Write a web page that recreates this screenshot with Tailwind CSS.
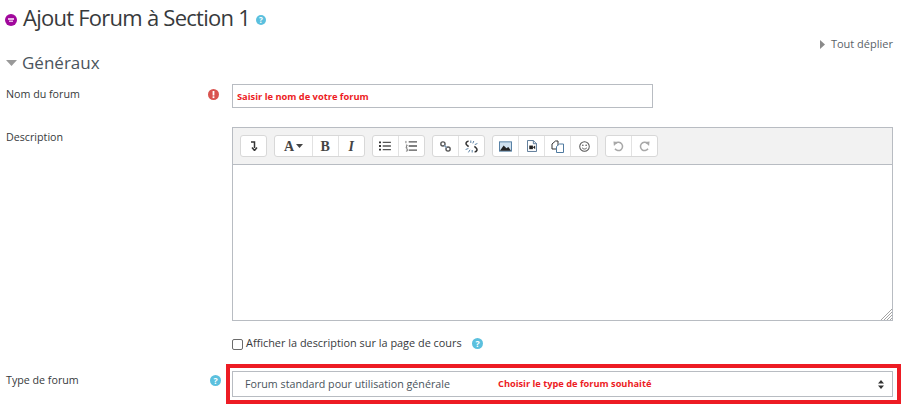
<!DOCTYPE html>
<html lang="fr">
<head>
    <meta charset="UTF-8">
    <title>Ajout Forum</title>
    <script src="https://cdn.jsdelivr.net/npm/@tailwindcss/browser@4"></script>
</head>
<body class="bg-white w-[912px] h-[410px] overflow-hidden font-['Open_Sans',sans-serif] text-[#373a3c]">
    <div class="pl-[6px] pr-[11px]">
        <!-- heading -->
        <div class="flex items-center h-[36px]">
            <svg class="w-[12px] h-[12px] mt-[3px] -ml-[1px]" viewBox="0 0 12 12"><circle cx="6" cy="6" r="6" fill="#a1089c"/><rect x="3" y="4" width="6" height="2" fill="#e8b8e6"/><rect x="4" y="6.5" width="4" height="1.5" fill="#e8b8e6"/></svg>
            <h2 class="ml-[6px] -mt-[2px] text-[22px] tracking-[-0.75px] leading-[36px] text-[#373a3c]">Ajout Forum à Section 1</h2>
            <svg class="ml-[6px] mt-[3px] w-[10px] h-[10px]" viewBox="0 0 10 10"><circle cx="5" cy="5" r="5" fill="#5bc0de"/><text x="5" y="8" text-anchor="middle" font-size="8" font-weight="700" fill="#fff" font-family="Open Sans">?</text></svg>
        </div>
        <div class="flex justify-end items-center h-[18px] mt-[-1px] mr-[8px] text-[11px] text-[#5a6268]">
            <svg class="w-[5px] h-[9px] mr-[6px]" viewBox="0 0 5 9"><path d="M0 0 L5 4.5 L0 9 Z" fill="#8a8a8a"/></svg>
            Tout déplier
        </div>
        <div class="flex items-center h-[24px] mt-[-2px]">
            <svg class="w-[11px] h-[6px]" viewBox="0 0 11 6"><path d="M0 0 H11 L5.5 6 Z" fill="#999"/></svg>
            <h3 class="ml-[5px] text-[17px] leading-[24px] text-[#4a545c]">Généraux</h3>
        </div>

        <!-- nom du forum -->
        <div class="flex mt-[9px] h-[24px]">
            <div class="w-[202px] text-[10.7px] leading-[20px]">Nom du forum</div>
            <div class="w-[24px] pt-[5px]">
                <svg class="w-[11px] h-[11px]" viewBox="0 0 11 11"><circle cx="5.5" cy="5.5" r="5.5" fill="#d9534f"/><rect x="4.6" y="2" width="1.8" height="4.5" fill="#fff"/><rect x="4.6" y="7.3" width="1.8" height="1.8" fill="#fff"/></svg>
            </div>
            <div class="w-[421px] h-[24px] border border-[#b8bcc2] pl-[4px] text-[9.3px] leading-[24px] font-bold text-[#ed1c24]">Saisir le nom de votre forum</div>
        </div>

        <!-- description -->
        <div class="flex mt-[19px]">
            <div class="w-[226px] text-[10.7px] leading-[20px]">Description</div>
            <div class="w-[661px] h-[194px] border border-[#b8bcc2] flex flex-col">
                <div class="h-[37px] bg-[#f2f2f2] border-b border-[#b8bcc2] flex gap-[7px] pl-[7px] pt-[7px] shrink-0">
                    <div class="flex h-[22px] bg-white border border-[#d8d8d8] rounded-[3px]">
                        <div class="w-[25px] flex items-center justify-center">
                            <svg class="w-[8px] h-[10px]" viewBox="0 0 8 10"><path d="M1 1H4.5V7M2 6.5L4.5 9.5L7 6.5" fill="none" stroke="#333" stroke-width="1.5"/></svg>
                        </div>
                    </div>
                    <div class="flex h-[22px] bg-white border border-[#d8d8d8] rounded-[3px] divide-x divide-[#e2e2e2]">
                        <div class="w-[38px] flex items-center justify-center gap-[2px] font-['Liberation_Serif',serif] font-bold text-[14px] text-[#444]">A<svg class="w-[7px] h-[4px]" viewBox="0 0 7 4"><path d="M0 0H7L3.5 4Z" fill="#444"/></svg></div>
                        <div class="w-[25.5px] flex items-center justify-center font-['Liberation_Serif',serif] font-bold text-[14px] text-[#444]">B</div>
                        <div class="w-[25.5px] flex items-center justify-center font-['Liberation_Serif',serif] font-bold italic text-[14px] text-[#444]">I</div>
                    </div>
                    <div class="flex h-[22px] bg-white border border-[#d8d8d8] rounded-[3px] divide-x divide-[#e2e2e2]">
                        <div class="w-[25.5px] flex items-center justify-center">
                            <svg class="w-[12px] h-[10px]" viewBox="0 0 13 11"><path d="M0 1.5H2M0 5.5H2M0 9.5H2" stroke="#222" stroke-width="2"/><path d="M4 1.5H13M4 5.5H13M4 9.5H13" stroke="#555" stroke-width="1.4"/></svg>
                        </div>
                        <div class="w-[25.5px] flex items-center justify-center">
                            <svg class="w-[12px] h-[12px]" viewBox="0 0 13 12"><path d="M1 0.5V3M1 5H2.5L1 7.5H2.5M1 9H2.5V11.5H1" fill="none" stroke="#555" stroke-width="0.8"/><path d="M4 1.5H13M4 6H13M4 10.5H13" stroke="#555" stroke-width="1.4"/></svg>
                        </div>
                    </div>
                    <div class="flex h-[22px] bg-white border border-[#d8d8d8] rounded-[3px] divide-x divide-[#e2e2e2]">
                        <div class="w-[25.5px] flex items-center justify-center">
                            <svg class="w-[11px] h-[11px]" viewBox="0 0 12 12"><g fill="none" stroke="#555" stroke-width="1.5"><circle cx="3.2" cy="3.2" r="2.3"/><circle cx="8.8" cy="8.8" r="2.3"/></g><path d="M4.6 4.6L7.4 7.4" stroke="#7a98b5" stroke-width="1.3"/></svg>
                        </div>
                        <div class="w-[25.5px] flex items-center justify-center">
                            <svg class="w-[13px] h-[13px]" viewBox="0 0 13 13"><path d="M3.6 1.2C1.6 1 0.3 3.2 1.6 4.8L3.6 6.6M9.6 11.8C11.6 12 12.7 9.8 11.4 8.2L9.4 6.4" fill="none" stroke="#333" stroke-width="1.5"/><path d="M5.8 0.5V3M8.8 1L7.8 3.4M12.4 3.5L9.8 4.6M0.6 9.5L3.4 8.5M3.4 12.4L5 9.8M7.2 12.5V10" stroke="#5f84a6" stroke-width="1"/></svg>
                        </div>
                    </div>
                    <div class="flex h-[22px] bg-white border border-[#d8d8d8] rounded-[3px] divide-x divide-[#e2e2e2]">
                        <div class="w-[26px] flex items-center justify-center">
                            <svg class="w-[13px] h-[11px]" viewBox="0 0 14 11"><rect x="0.5" y="0.5" width="13" height="10" fill="#cfe0ee" stroke="#4f7aa0"/><path d="M1 10L5 4.5L8 7.5L10 6L13 10Z" fill="#222"/></svg>
                        </div>
                        <div class="w-[26px] flex items-center justify-center">
                            <svg class="w-[10px] h-[12px]" viewBox="0 0 11 13"><path d="M0.5 0.5H7L10.5 4V12.5H0.5Z" fill="#fff" stroke="#4f6f8f"/><path d="M7 0.5V4H10.5" fill="none" stroke="#4f6f8f"/><rect x="2.5" y="6" width="4" height="4" fill="#222"/><path d="M6.5 8L9 6V10Z" fill="#222"/></svg>
                        </div>
                        <div class="w-[26px] flex items-center justify-center">
                            <svg class="w-[13px] h-[13px]" viewBox="0 0 13 13"><path d="M1 9V4L4.5 1H7V9Z" fill="#fff" stroke="#333"/><path d="M5.5 12.5V6.5L8.5 4H12.5V12.5Z" fill="#fff" stroke="#4f7aa0"/></svg>
                        </div>
                        <div class="w-[26px] flex items-center justify-center">
                            <svg class="w-[11px] h-[11px]" viewBox="0 0 12 12"><circle cx="6" cy="6" r="5.2" fill="none" stroke="#555" stroke-width="1.1"/><circle cx="4.2" cy="4.6" r="0.9" fill="#555"/><circle cx="7.8" cy="4.6" r="0.9" fill="#555"/><path d="M3.4 7.4C4.5 9.2 7.5 9.2 8.6 7.4" fill="none" stroke="#555"/></svg>
                        </div>
                    </div>
                    <div class="flex h-[22px] bg-white border border-[#d8d8d8] rounded-[3px] divide-x divide-[#e2e2e2]">
                        <div class="w-[25.5px] flex items-center justify-center">
                            <svg class="w-[11px] h-[11px]" viewBox="0 0 12 12"><path d="M3 2.5A4.5 4.5 0 1 1 2.2 8.5" fill="none" stroke="#a8a8a8" stroke-width="1.7"/><path d="M0.5 0.5L5.5 1L1 5.5Z" fill="#a8a8a8"/></svg>
                        </div>
                        <div class="w-[25.5px] flex items-center justify-center">
                            <svg class="w-[11px] h-[11px]" viewBox="0 0 12 12"><path d="M9 2.5A4.5 4.5 0 1 0 9.8 8.5" fill="none" stroke="#a8a8a8" stroke-width="1.7"/><path d="M11.5 0.5L6.5 1L11 5.5Z" fill="#a8a8a8"/></svg>
                        </div>
                    </div>
                </div>
                <div class="grow relative">
                    <svg class="absolute right-0 bottom-0 w-[11px] h-[11px]" viewBox="0 0 11 11"><path d="M11 0L0 11M11 3L3 11M11 6L6 11M11 9L9 11" stroke="#8d8d8d" stroke-width="0.8"/></svg>
                </div>
            </div>
        </div>

        <!-- afficher -->
        <div class="flex items-center ml-[226px] mt-[12px] h-[20px] text-[10.9px]">
            <div class="w-[11px] h-[11px] border border-[#6b6b6b] rounded-[2px] mt-[2px]"></div>
            <span class="ml-[3px]">Afficher la description sur la page de cours</span>
            <svg class="ml-[10px] w-[11px] h-[11px]" viewBox="0 0 10 10"><circle cx="5" cy="5" r="5" fill="#5bc0de"/><text x="5" y="8" text-anchor="middle" font-size="8" font-weight="700" fill="#fff" font-family="Open Sans">?</text></svg>
        </div>

        <!-- type de forum -->
        <div class="flex mt-[11px]">
            <div class="w-[204px] text-[10.7px] leading-[20px] mt-[6px]">Type de forum</div>
            <div class="w-[16px] pt-[11px]">
                <svg class="w-[11px] h-[11px]" viewBox="0 0 10 10"><circle cx="5" cy="5" r="5" fill="#5bc0de"/><text x="5" y="8" text-anchor="middle" font-size="8" font-weight="700" fill="#fff" font-family="Open Sans">?</text></svg>
            </div>
            <div class="w-[675px] h-[40px] border-[4px] border-[#ed1c24] pl-[2px] pt-[3px] pr-[4px]">
                <div class="h-[26px] border border-[#b8bcc2] flex items-center pl-[12px] pr-[8px] text-[10.7px]">
                    <span class="text-[#4a545c] w-[253px]">Forum standard pour utilisation générale</span>
                    <span class="text-[9.25px] font-bold text-[#ed1c24]">Choisir le type de forum souhaité</span>
                    <svg class="ml-auto w-[6px] h-[9px]" viewBox="0 0 6 9"><path d="M0 3.5L3 0L6 3.5ZM0 5.5L3 9L6 5.5Z" fill="#333"/></svg>
                </div>
            </div>
        </div>
    </div>
</body>
</html>
